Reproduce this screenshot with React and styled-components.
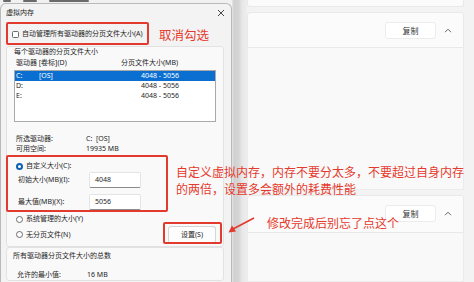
import React from 'react';
import styled, { createGlobalStyle } from 'styled-components';

const GlobalStyle = createGlobalStyle`
  html, body {
    margin: 0;
    padding: 0;
    background: #f3f3f3;
  }
  * {
    box-sizing: border-box;
  }
`;

const CJK = `"Noto Sans", "Noto Sans CJK SC", sans-serif`;

const Stage = styled.div`
  position: relative;
  width: 474px;
  height: 282px;
  overflow: hidden;
  display: flex;
  background: #f3f3f3;
  font-family: ${CJK};
`;

const LeftColumn = styled.div`
  width: 232px;
  display: flex;
  flex-direction: column;
  flex-shrink: 0;
`;

// bottoms of the menu text of the window behind, cut off by the dialog
const BackStrip = styled.div`
  height: 3px;
  display: flex;
  align-items: flex-start;
  gap: 12px;
  padding-left: 3px;
  background: #f1f1f1;
`;

const Smudge = styled.div`
  width: ${(p) => p.$w}px;
  height: 2px;
  background: #6a6a6a;
  border-radius: 1px;
`;

const Dialog = styled.div`
  flex: 1;
  background: #f3f3f3;
  border: 1px solid #b9b9b9;
  border-bottom: none;
  border-radius: 6px 6px 0 0;
  display: flex;
  flex-direction: column;
  color: #1f1f1f;
  font-size: 7px;
  line-height: 10px;
`;

const TitleBar = styled.div`
  height: 18px;
  display: flex;
  align-items: center;
  justify-content: space-between;
  padding: 0 6px 0 5px;
  font-size: 7px;
`;

const CheckRow = styled.div`
  height: 24px;
  display: flex;
  align-items: center;
  padding-left: 11px;
  gap: 3px;
`;

const CheckBox = styled.span`
  width: 7px;
  height: 7px;
  border: 1px solid #6b6b6b;
  border-radius: 1.5px;
  background: #fff;
`;

const Group = styled.div`
  margin: 0 7px 0 5px;
  border: 1px solid #e2e2e2;
  border-radius: 3px;
  background: #f9f9f9;
  padding: ${(p) => (p.$open ? '0 7px 1px 0' : '0')};
`;

const Legend = styled.div`
  height: 10px;
  padding-left: ${(p) => p.$indent || 7}px;
  margin-top: ${(p) => p.$top || 0}px;
`;

const HeaderRow = styled.div`
  height: 10px;
  margin-top: 1px;
  display: grid;
  grid-template-columns: 105px 1fr;
  padding-left: 9px;
`;

const ListBox = styled.div`
  margin: 2px 0 0 7px;
  height: 52px;
  border: 1px solid #a9a9a9;
  background: #fff;
`;

const ListRow = styled.div`
  height: 10px;
  display: grid;
  grid-template-columns: 23px 102px 1fr;
  padding-left: 1px;
  background: ${(p) => (p.$selected ? '#0a6fd1' : 'transparent')};
  color: ${(p) => (p.$selected ? '#fff' : '#1f1f1f')};
`;

const InfoBlock = styled.div`
  margin-top: 12px;
`;

const InfoRow = styled.div`
  height: 10px;
  margin-top: ${(p) => p.$top || 0}px;
  display: grid;
  grid-template-columns: 70px 1fr;
  padding-left: ${(p) => p.$indent || 9}px;
`;

const RadioRow = styled.div`
  height: 10px;
  margin-top: ${(p) => p.$top || 0}px;
  display: flex;
  align-items: center;
  padding-left: 9px;
  gap: 3px;
`;

const Radio = styled.span`
  width: 7px;
  height: 7px;
  border-radius: 50%;
  background: #fff;
  border: ${(p) => (p.$checked ? '2px solid #0a5fb4' : '1px solid #6b6b6b')};
`;

const FieldRow = styled.div`
  height: 18px;
  margin-top: ${(p) => p.$top || 0}px;
  display: flex;
  align-items: center;
  padding-left: 11px;
`;

const FieldLabel = styled.span`
  width: 71px;
`;

const Input = styled.div`
  width: 52px;
  height: 16px;
  background: #fff;
  border: 1px solid #e4e4e4;
  border-bottom-color: #8a8a8a;
  border-radius: 2px;
  padding-left: 5px;
  display: flex;
  align-items: center;
`;

const LastRow = styled.div`
  height: 21px;
  display: flex;
  align-items: center;
  justify-content: space-between;
`;

const SetButton = styled.div`
  width: 48px;
  height: 18px;
  background: #fdfdfd;
  border: 1px solid #d5d5d5;
  border-bottom-color: #b8b8b8;
  border-radius: 3px;
  display: flex;
  align-items: center;
  justify-content: center;
`;

const Shadow = styled.div`
  width: 15px;
  flex-shrink: 0;
  background: linear-gradient(
    90deg,
    #e6e6e6 0px,
    #d0d0d0 2px,
    #d6d6d6 7px,
    #e7e7e7 10px,
    #eeeeee 15px
  );
`;

const BackWindow = styled.div`
  width: 217px;
  display: flex;
  flex-direction: column;
  flex-shrink: 0;
`;

const TopCard = styled.div`
  height: 7px;
  background: #fbfbfb;
  border: 1px solid #e9e9e9;
  border-top: none;
  border-radius: 0 0 3px 3px;
`;

const Card = styled.div`
  margin-top: ${(p) => p.$top}px;
  height: ${(p) => p.$h}px;
  background: #fbfbfb;
  border: 1px solid #e9e9e9;
  border-radius: 3px 3px 0 0;
  display: flex;
  align-items: center;
  justify-content: flex-end;
  gap: 8px;
  padding-right: 11px;
`;

const Expanded = styled.div`
  height: ${(p) => p.$h}px;
  background: #f9f9f9;
  border: 1px solid #ececec;
  border-top: none;
`;

const CopyButton = styled.div`
  width: 51px;
  height: 17px;
  background: #fff;
  border: 1px solid #ececec;
  border-radius: 3px;
  font-size: 8px;
  color: #333;
  display: flex;
  align-items: center;
  justify-content: center;
`;

const RedBox = styled.div`
  position: absolute;
  border: 2px solid #e23a2e;
  border-radius: 2px;
`;

const Note = styled.div`
  position: absolute;
  color: #e5392d;
  font-family: "Noto Sans CJK SC", sans-serif;
  font-size: ${(p) => p.$size || 12}px;
  line-height: 17px;
  white-space: nowrap;
`;

const Chevron = () => (
  <svg width="8" height="5" viewBox="0 0 8 5">
    <path d="M1 4.2 L4 1.2 L7 4.2" fill="none" stroke="#555" strokeWidth="0.9" />
  </svg>
);

const CopyCard = ({ top, h }) => (
  <Card $top={top} $h={h}>
    <CopyButton>复制</CopyButton>
    <Chevron />
  </Card>
);

export default function App() {
  return (
    <>
      <GlobalStyle />
      <Stage>
        <LeftColumn>
          <BackStrip>
            <Smudge $w={8} />
            <Smudge $w={14} />
            <Smudge $w={40} />
          </BackStrip>
          <Dialog>
            <TitleBar>
              <span>虚拟内存</span>
              <svg width="8" height="8" viewBox="0 0 8 8">
                <path d="M1 1 L7 7 M7 1 L1 7" stroke="#333" strokeWidth="0.9" />
              </svg>
            </TitleBar>
            <CheckRow>
              <CheckBox />
              <span>自动管理所有驱动器的分页文件大小(A)</span>
            </CheckRow>
            <Group $open>
              <Legend>每个驱动器的分页文件大小</Legend>
              <HeaderRow>
                <span>驱动器 [卷标](D)</span>
                <span>分页文件大小(MB)</span>
              </HeaderRow>
              <ListBox>
                <ListRow $selected>
                  <span>C:</span>
                  <span>[OS]</span>
                  <span>4048 - 5056</span>
                </ListRow>
                <ListRow>
                  <span>D:</span>
                  <span />
                  <span>4048 - 5056</span>
                </ListRow>
                <ListRow>
                  <span>E:</span>
                  <span />
                  <span>4048 - 5056</span>
                </ListRow>
              </ListBox>
              <InfoBlock>
                <InfoRow>
                  <span>所选驱动器:</span>
                  <span>C:&nbsp;&nbsp;[OS]</span>
                </InfoRow>
                <InfoRow>
                  <span>可用空间:</span>
                  <span>19935 MB</span>
                </InfoRow>
              </InfoBlock>
              <RadioRow $top={7}>
                <Radio $checked />
                <span>自定义大小(C):</span>
              </RadioRow>
              <FieldRow>
                <FieldLabel>初始大小(MB)(I):</FieldLabel>
                <Input>4048</Input>
              </FieldRow>
              <FieldRow $top={4}>
                <FieldLabel>最大值(MB)(X):</FieldLabel>
                <Input>5056</Input>
              </FieldRow>
              <RadioRow $top={3}>
                <Radio />
                <span>系统管理的大小(Y)</span>
              </RadioRow>
              <LastRow>
                <RadioRow>
                  <Radio />
                  <span>无分页文件(N)</span>
                </RadioRow>
                <SetButton>设置(S)</SetButton>
              </LastRow>
            </Group>
            <Group>
              <Legend $indent={6} $top={3}>所有驱动器分页文件大小的总数</Legend>
              <InfoRow $indent={10} $top={9}>
                <span>允许的最小值:</span>
                <span>16 MB</span>
              </InfoRow>
            </Group>
          </Dialog>
        </LeftColumn>
        <Shadow />
        <BackWindow>
          <TopCard />
          <CopyCard top={5} h={37} />
          <Expanded $h={144} />
          <CopyCard top={5} h={39} />
          <Expanded $h={50} />
        </BackWindow>

        <RedBox style={{ left: 6, top: 22, width: 143, height: 23 }} />
        <RedBox style={{ left: 6, top: 155, width: 162, height: 57 }} />
        <RedBox style={{ left: 163, top: 222, width: 59, height: 22 }} />

        <Note $size={12.5} style={{ left: 159, top: 26 }}>取消勾选</Note>
        <Note style={{ left: 176, top: 163 }}>
          自定义虚拟内存，内存不要分太多，不要超过自身内存
          <br />
          的两倍，设置多会额外的耗费性能
        </Note>
        <Note style={{ left: 267, top: 214 }}>修改完成后别忘了点这个</Note>
        <svg
          width="30"
          height="20"
          viewBox="0 0 30 20"
          style={{ position: 'absolute', left: 227, top: 216 }}
        >
          <path d="M27 2 L6 13" stroke="#e23a2e" strokeWidth="1.6" fill="none" />
          <path d="M1.5 16.5 L5 9.5 L9 15.5 Z" fill="#e23a2e" />
        </svg>
      </Stage>
    </>
  );
}
